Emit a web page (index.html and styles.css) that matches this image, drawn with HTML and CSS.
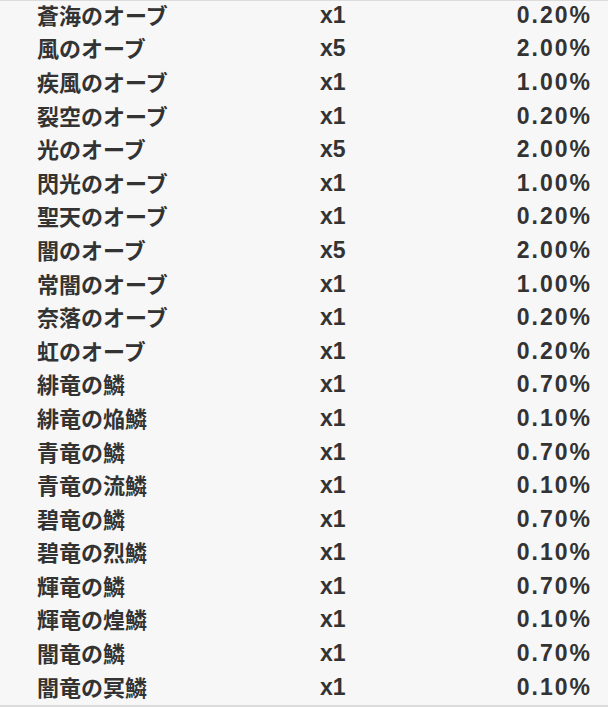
FILE: index.html
```html
<!DOCTYPE html>
<html lang="ja">
<head>
<meta charset="utf-8">
<link rel="stylesheet" href="styles.css">
</head>
<body>
<div class="table">
  <div class="row"><span class="name">蒼海のオーブ</span><span class="qty">x1</span><span class="rate">0.20%</span></div>
  <div class="row"><span class="name">風のオーブ</span><span class="qty">x5</span><span class="rate">2.00%</span></div>
  <div class="row"><span class="name">疾風のオーブ</span><span class="qty">x1</span><span class="rate">1.00%</span></div>
  <div class="row"><span class="name">裂空のオーブ</span><span class="qty">x1</span><span class="rate">0.20%</span></div>
  <div class="row"><span class="name">光のオーブ</span><span class="qty">x5</span><span class="rate">2.00%</span></div>
  <div class="row"><span class="name">閃光のオーブ</span><span class="qty">x1</span><span class="rate">1.00%</span></div>
  <div class="row"><span class="name">聖天のオーブ</span><span class="qty">x1</span><span class="rate">0.20%</span></div>
  <div class="row"><span class="name">闇のオーブ</span><span class="qty">x5</span><span class="rate">2.00%</span></div>
  <div class="row"><span class="name">常闇のオーブ</span><span class="qty">x1</span><span class="rate">1.00%</span></div>
  <div class="row"><span class="name">奈落のオーブ</span><span class="qty">x1</span><span class="rate">0.20%</span></div>
  <div class="row"><span class="name">虹のオーブ</span><span class="qty">x1</span><span class="rate">0.20%</span></div>
  <div class="row"><span class="name">緋竜の鱗</span><span class="qty">x1</span><span class="rate">0.70%</span></div>
  <div class="row"><span class="name">緋竜の焔鱗</span><span class="qty">x1</span><span class="rate">0.10%</span></div>
  <div class="row"><span class="name">青竜の鱗</span><span class="qty">x1</span><span class="rate">0.70%</span></div>
  <div class="row"><span class="name">青竜の流鱗</span><span class="qty">x1</span><span class="rate">0.10%</span></div>
  <div class="row"><span class="name">碧竜の鱗</span><span class="qty">x1</span><span class="rate">0.70%</span></div>
  <div class="row"><span class="name">碧竜の烈鱗</span><span class="qty">x1</span><span class="rate">0.10%</span></div>
  <div class="row"><span class="name">輝竜の鱗</span><span class="qty">x1</span><span class="rate">0.70%</span></div>
  <div class="row"><span class="name">輝竜の煌鱗</span><span class="qty">x1</span><span class="rate">0.10%</span></div>
  <div class="row"><span class="name">闇竜の鱗</span><span class="qty">x1</span><span class="rate">0.70%</span></div>
  <div class="row"><span class="name">闇竜の冥鱗</span><span class="qty">x1</span><span class="rate">0.10%</span></div>
</div>
</body>
</html>
```
FILE: styles.css
```css
html, body {
  margin: 0;
  padding: 0;
  background: #f7f7f7;
}
.table {
  box-shadow: inset 0 1px 0 #dcdcdc;
  border-bottom: 2px solid #dcdcdc;
  font-family: "Liberation Sans", "Noto Sans CJK JP", sans-serif;
  font-weight: bold;
  color: #333333;
  font-size: 23px;
}
.row {
  box-sizing: border-box;
  display: grid;
  grid-template-columns: 283px 1fr auto;
  align-items: center;
  height: 33.6px;
  padding: 0 16px 3px 37px;
}
.name {
  font-family: "Noto Sans CJK JP", sans-serif;
  font-size: 22px;
  line-height: 1;
  padding-bottom: 3px;
}
.qty {
  letter-spacing: 0;
}
.rate {
  text-align: right;
  letter-spacing: 2px;
}
```
